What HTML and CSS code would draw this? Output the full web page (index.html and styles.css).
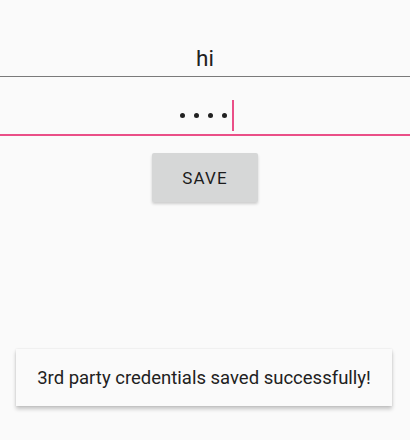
FILE: index.html
```html
<!DOCTYPE html>
<html lang="en">
<head>
    <meta charset="UTF-8">
    <meta name="viewport" content="width=device-width, initial-scale=1.0">
    <title>Credentials</title>
    <link rel="stylesheet" href="styles.css">
</head>
<body>
    <div class="screen">
        <div class="field field-user">hi</div>
        <div class="field field-pass">
            <span class="dot"></span>
            <span class="dot"></span>
            <span class="dot"></span>
            <span class="dot"></span>
            <span class="cursor"></span>
        </div>
        <button type="button" class="save">SAVE</button>
        <div class="snackbar">3rd party credentials saved successfully!</div>
    </div>
</body>
</html>
```

FILE: styles.css
```css
body {
    margin: 0;
    background-color: #fafafa;
    font-family: Roboto, "Liberation Sans", sans-serif;
    color: #212121;
}
.screen {
    display: flex;
    flex-direction: column;
    align-items: center;
    min-height: 440px;
}
.field {
    align-self: stretch;
    display: flex;
    justify-content: center;
}
.field-user {
    height: 26px;
    padding-top: 45px;
    padding-bottom: 5px;
    line-height: 26px;
    font-size: 22.5px;
    border-bottom: 1px solid #7a7a7a;
}
.field-pass {
    align-items: center;
    height: 31px;
    padding: 23px 0 3px 4px;
    border-bottom: 2px solid #ea4f87;
}
.dot {
    width: 5px;
    height: 5px;
    border-radius: 50%;
    background-color: #212121;
    margin-right: 9px;
}
.dot:nth-child(4) {
    margin-right: 5px;
}
.cursor {
    width: 2px;
    height: 31px;
    background-color: #ea4f87;
}
.save {
    margin-top: 17px;
    width: 106px;
    height: 49px;
    border: none;
    border-radius: 2px;
    background-color: #d6d7d7;
    box-shadow: 0 2px 3px rgba(0, 0, 0, 0.18);
    font-family: Roboto, "Liberation Sans", sans-serif;
    font-size: 17px;
    font-weight: 400;
    letter-spacing: 1.1px;
    color: #1c1c1c;
    padding: 0;
}
.snackbar {
    align-self: flex-start;
    margin: 147px 0 0 16px;
    width: 376px;
    height: 57px;
    display: flex;
    align-items: center;
    justify-content: center;
    background-color: #fafafa;
    box-shadow: 0 3px 4px rgba(0, 0, 0, 0.22), 0 0 2px rgba(0, 0, 0, 0.1);
    font-size: 18.5px;
}
```
